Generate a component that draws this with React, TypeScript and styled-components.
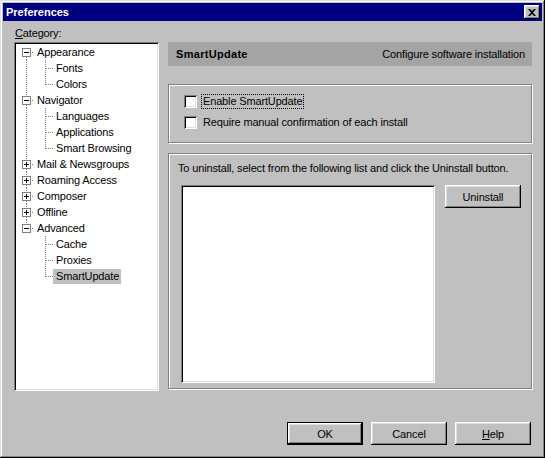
import React from 'react';
import styled, { createGlobalStyle } from 'styled-components';

const GlobalStyle = createGlobalStyle`
  html, body { margin: 0; padding: 0; background: #c0c0c0; }
  body { font-family: "Liberation Sans", Arial, sans-serif; font-size: 11px; }
`;

const raised = `
  box-shadow: inset -1px -1px #000, inset 1px 1px #fff, inset -2px -2px #808080, inset 2px 2px #dfdfdf;
`;
const sunken = `
  box-shadow: inset 1px 1px #808080, inset -1px -1px #fff, inset 2px 2px #000, inset -2px -2px #dfdfdf;
`;

const Window = styled.div`
  width: 545px;
  height: 458px;
  box-sizing: border-box;
  padding: 3px;
  background: #c0c0c0;
  box-shadow: inset -1px -1px #000, inset 1px 1px #dfdfdf, inset -2px -2px #808080, inset 2px 2px #fff;
  display: flex;
  flex-direction: column;
  font-family: "Liberation Sans", Arial, sans-serif;
  font-size: 11px;
  letter-spacing: -0.15px;
  color: #000;
`;

const TitleBar = styled.div`
  height: 18px;
  flex: none;
  background: #000080;
  display: flex;
  align-items: center;
  justify-content: space-between;
  padding: 0 2px 0 3px;
`;

const TitleText = styled.span`
  color: #fff;
  font-weight: bold;
  letter-spacing: 0;
  line-height: 14px;
`;

const CloseButton = styled.button`
  width: 16px;
  height: 14px;
  padding: 0;
  border: 0;
  background: #c0c0c0;
  ${raised}
  display: flex;
  align-items: center;
  justify-content: center;
`;

const Body = styled.div`
  display: grid;
  grid-template-columns: 145px 364px;
  grid-template-rows: 15px 349px;
  column-gap: 9px;
  padding: 6px 0 0 11px;
`;

const FieldLabel = styled.div`
  grid-column: 1;
  grid-row: 1;
  line-height: 12px;
  padding-left: 1px;
`;

const Key = styled.span`
  text-decoration: underline;
`;

const TreeBox = styled.div`
  grid-column: 1;
  grid-row: 2;
  background: #fff;
  ${sunken}
  padding: 2px;
  box-sizing: border-box;
  display: flex;
  flex-direction: column;
`;

const TreeRow = styled.div`
  display: flex;
  align-items: center;
  height: 16px;
`;

const TreeLabel = styled.span<{ $selected?: boolean }>`
  height: 15px;
  line-height: 15px;
  padding: 0 2px 0 3px;
  white-space: nowrap;
  background: ${(p) => (p.$selected ? '#c0c0c0' : 'transparent')};
`;

const RightPanel = styled.div`
  grid-column: 2;
  grid-row: 2;
  display: flex;
  flex-direction: column;
`;

const PanelHeader = styled.div`
  height: 24px;
  flex: none;
  background: #a4a4a4;
  display: flex;
  align-items: center;
  justify-content: space-between;
  padding: 0 7px 0 8px;
  margin-bottom: 18px;
`;

const HeaderTitle = styled.span`
  font-weight: bold;
  letter-spacing: 0.3px;
`;

const GroupBox = styled.div<{ $height: number }>`
  height: ${(p) => p.$height}px;
  box-sizing: border-box;
  border: 1px solid #808080;
  box-shadow: inset 1px 1px #fff, 1px 1px #fff;
  display: flex;
  flex-direction: column;
`;

const OptionsGroup = styled(GroupBox)`
  padding: 9px 0 0 15px;
  gap: 6px;
`;

const UninstallGroup = styled(GroupBox)`
  margin-top: 10px;
  padding: 8px 0 0 9px;
`;

const CheckRow = styled.label`
  display: flex;
  align-items: center;
  height: 15px;
`;

const CheckBox = styled.span`
  width: 13px;
  height: 13px;
  background: #fff;
  ${sunken}
  flex: none;
`;

const CheckText = styled.span<{ $focused?: boolean }>`
  margin-left: 4px;
  padding: 0 1px;
  line-height: 13px;
  border: 1px dotted ${(p) => (p.$focused ? '#000' : 'transparent')};
`;

const Instruction = styled.div`
  line-height: 13px;
`;

const ListRow = styled.div`
  display: flex;
  align-items: flex-start;
  gap: 10px;
  margin: 10px 0 0 3px;
`;

const ListBox = styled.div`
  width: 254px;
  height: 198px;
  background: #fff;
  ${sunken}
`;

const Button = styled.button<{ $default?: boolean }>`
  width: 76px;
  height: 23px;
  box-sizing: border-box;
  padding: 0;
  background: #c0c0c0;
  font-family: inherit;
  font-size: 11px;
  letter-spacing: -0.15px;
  color: #000;
  border: ${(p) => (p.$default ? '1px solid #000' : '0')};
  ${raised}
`;

const Footer = styled.div`
  display: flex;
  justify-content: flex-end;
  gap: 8px;
  padding: 31px 11px 10px 0;
`;

type Node = { label: string; expanded?: boolean; children?: string[] };

const tree: Node[] = [
  { label: 'Appearance', expanded: true, children: ['Fonts', 'Colors'] },
  { label: 'Navigator', expanded: true, children: ['Languages', 'Applications', 'Smart Browsing'] },
  { label: 'Mail & Newsgroups' },
  { label: 'Roaming Access' },
  { label: 'Composer' },
  { label: 'Offline' },
  { label: 'Advanced', expanded: true, children: ['Cache', 'Proxies', 'SmartUpdate'] },
];

const dot = { stroke: '#808080', strokeDasharray: '1 1', shapeRendering: 'crispEdges' as const };

function RootGutter({ first, last, expanded }: { first: boolean; last: boolean; expanded: boolean }) {
  return (
    <svg width="18" height="16" style={{ flex: 'none' }}>
      {!first && <line x1="10.5" y1="0" x2="10.5" y2="4" {...dot} />}
      {!last && <line x1="10.5" y1="13" x2="10.5" y2="16" {...dot} />}
      <rect x="6.5" y="4.5" width="8" height="8" fill="#fff" stroke="#808080" shapeRendering="crispEdges" />
      <line x1="8" y1="8.5" x2="13" y2="8.5" stroke="#000" shapeRendering="crispEdges" />
      {!expanded && <line x1="10.5" y1="6" x2="10.5" y2="11" stroke="#000" shapeRendering="crispEdges" />}
      <line x1="16" y1="8.5" x2="18" y2="8.5" {...dot} />
    </svg>
  );
}

function ChildGutter({ parentLast, last }: { parentLast: boolean; last: boolean }) {
  return (
    <svg width="37" height="16" style={{ flex: 'none' }}>
      {!parentLast && <line x1="10.5" y1="0" x2="10.5" y2="16" {...dot} />}
      <line x1="29.5" y1="0" x2="29.5" y2={last ? 9 : 16} {...dot} />
      <line x1="30" y1="8.5" x2="37" y2="8.5" {...dot} />
    </svg>
  );
}

function CloseGlyph() {
  return (
    <svg width="8" height="7" viewBox="0 0 8 7">
      <path d="M0 0h2l2 2 2-2h2l-3 3.5 3 3.5h-2l-2-2-2 2h-2l3-3.5z" fill="#000" />
    </svg>
  );
}

export default function App() {
  const selected = 'SmartUpdate';
  const rows: React.ReactNode[] = [];
  tree.forEach((node, i) => {
    const first = i === 0;
    const last = i === tree.length - 1;
    rows.push(
      <TreeRow key={node.label}>
        <RootGutter first={first} last={last} expanded={!!node.expanded} />
        <TreeLabel $selected={node.label === selected}>{node.label}</TreeLabel>
      </TreeRow>
    );
    if (node.expanded && node.children) {
      node.children.forEach((child, j) => {
        rows.push(
          <TreeRow key={node.label + child}>
            <ChildGutter parentLast={last} last={j === node.children!.length - 1} />
            <TreeLabel $selected={child === selected}>{child}</TreeLabel>
          </TreeRow>
        );
      });
    }
  });

  return (
    <>
      <GlobalStyle />
      <Window>
        <TitleBar>
          <TitleText>Preferences</TitleText>
          <CloseButton aria-label="Close">
            <CloseGlyph />
          </CloseButton>
        </TitleBar>
        <Body>
          <FieldLabel>
            <Key>C</Key>ategory:
          </FieldLabel>
          <TreeBox>{rows}</TreeBox>
          <RightPanel>
            <PanelHeader>
              <HeaderTitle>SmartUpdate</HeaderTitle>
              <span>Configure software installation</span>
            </PanelHeader>
            <OptionsGroup $height={59}>
              <CheckRow>
                <CheckBox />
                <CheckText $focused>Enable SmartUpdate</CheckText>
              </CheckRow>
              <CheckRow>
                <CheckBox />
                <CheckText>Require manual confirmation of each install</CheckText>
              </CheckRow>
            </OptionsGroup>
            <UninstallGroup $height={236}>
              <Instruction>To uninstall, select from the following list and click the Uninstall button.</Instruction>
              <ListRow>
                <ListBox />
                <Button>Uninstall</Button>
              </ListRow>
            </UninstallGroup>
          </RightPanel>
        </Body>
        <Footer>
          <Button $default>OK</Button>
          <Button>Cancel</Button>
          <Button>
            <Key>H</Key>elp
          </Button>
        </Footer>
      </Window>
    </>
  );
}
